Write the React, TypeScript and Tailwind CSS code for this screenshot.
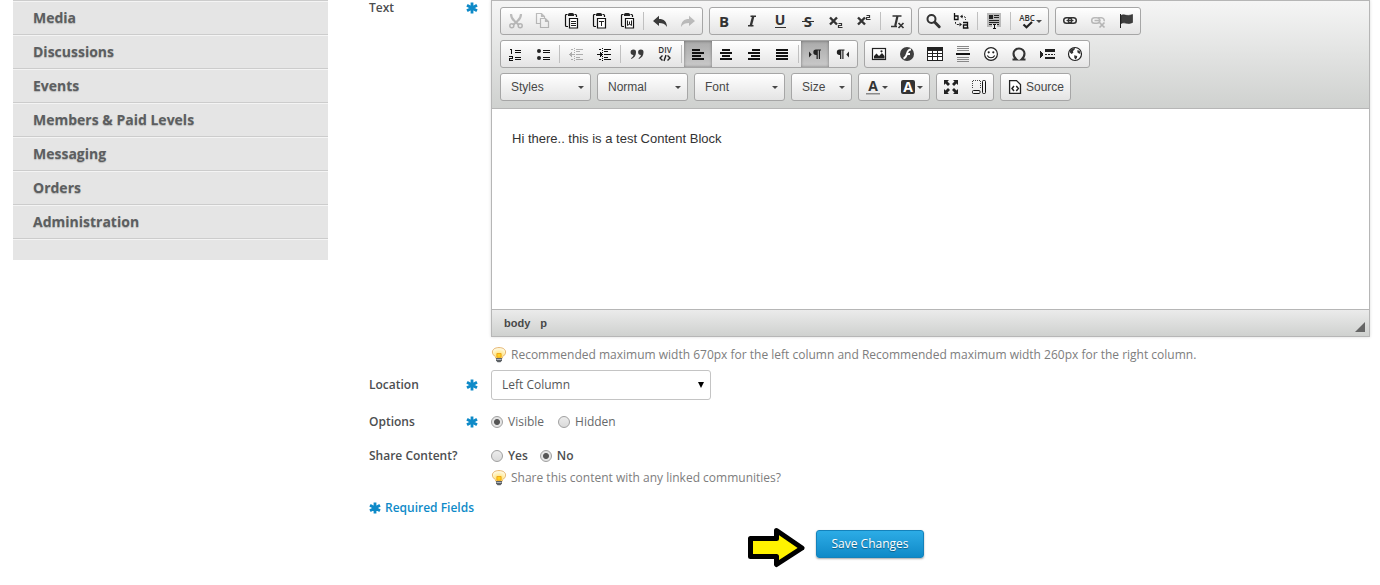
import { useState, type ReactNode } from "react";

const DARK = "#333333";

/* ---------- Icon primitives ---------- */

function Icon({ children, faded, crisp }: { children: ReactNode; faded?: boolean; crisp?: boolean }) {
  return (
    <svg
      viewBox="0 0 16 16"
      aria-hidden="true"
      className={faded ? "size-4 shrink-0 overflow-visible opacity-30" : "size-4 shrink-0 overflow-visible"}
      fill="none"
      stroke="none"
      shapeRendering={crisp ? "crispEdges" : "auto"}
    >
      {children}
    </svg>
  );
}

type GlyphProps = {
  x: number;
  y: number;
  size: number;
  children: string;
  weight?: number;
  fill?: string;
};

function Glyph({ x, y, size, children, weight = 700, fill = DARK }: GlyphProps) {
  return (
    <text
      x={x}
      y={y}
      fontSize={size}
      fontWeight={weight}
      fontFamily="'Open Sans', sans-serif"
      textAnchor="middle"
      fill={fill}
    >
      {children}
    </text>
  );
}

const CutIcon = () => (
  <Icon faded>
    <path d="M4 1c0 3 1 5 3.500 7l4.500 4M14 1c0 3-1 5-3.500 7L6 12" stroke={DARK} strokeWidth="2.200" />
    <circle cx="4.800" cy="12.700" r="2" stroke={DARK} strokeWidth="1.500" />
    <circle cx="13.200" cy="12.700" r="2" stroke={DARK} strokeWidth="1.500" />
  </Icon>
);

const CopyIcon = () => (
  <Icon faded>
    <path d="M5 10.500H1.500V.5h5l3 3V5M6.500 .5v3h3" stroke={DARK} strokeWidth="1.200" />
    <path d="M5.500 5.500h5l3 3v6h-8zM10.500 5.500v3h3" stroke={DARK} strokeWidth="1.200" />
  </Icon>
);

function Clipboard({ children }: { children?: ReactNode }) {
  return (
    <Icon>
      <path d="M4.500 1.500h-1q-1 0-1 1v10q0 1 1 1H5M11.500 1.500h1q1 0 1 1V4" stroke="#111" strokeWidth="1.200" />
      <path d="M5 3V1.500Q5 0 6.500 0h3Q11 0 11 1.500V3z" fill="#222" />
      <path d="M6.500 5.500h8v9.500h-8z" fill="#fff" stroke="#111" strokeWidth="1.200" />
      {children}
    </Icon>
  );
}

const PasteIcon = () => (
  <Clipboard>
    <path d="M8 8.500h5M8 10.500h5M8 12.500h5" stroke="#222" />
  </Clipboard>
);
const PasteTextIcon = () => (
  <Clipboard>
    <path d="M8 8.500h5M10.500 8v5" stroke="#222" />
  </Clipboard>
);
const PasteWordIcon = () => (
  <Clipboard>
    <path d="M8.500 7.500v5l2-1.500 2 1.500v-5M10.500 8.500v3" stroke="#222" />
  </Clipboard>
);

const UndoIcon = () => (
  <Icon>
    <path d="M1 8 7 2.800v3.200c5 0 7.800 2.500 8 8C13 10.800 10.500 10 7 10v3z" fill="#3a3a3a" />
  </Icon>
);
const RedoIcon = () => (
  <Icon faded>
    <path d="M15 8 9 2.800v3.200c-5 0-7.800 2.500-8 8C3 10.800 5.500 10 9 10v3z" fill="#3a3a3a" />
  </Icon>
);

const BoldIcon = () => (
  <Icon>
    <Glyph x={8} y={13.5} size={15}>B</Glyph>
  </Icon>
);
const ItalicIcon = () => (
  <Icon>
    <path d="M6.500 3.200h5.500M4 12.800h5.500" stroke={DARK} strokeWidth="1.600" />
    <path d="M9.300 3 6.700 13" stroke={DARK} strokeWidth="2.400" />
  </Icon>
);
const UnderlineIcon = () => (
  <Icon>
    <Glyph x={8} y={12} size={14}>U</Glyph>
    <path d="M3 14.500h11" stroke={DARK} />
  </Icon>
);
const StrikeIcon = () => (
  <Icon>
    <Glyph x={8} y={13.5} size={15}>S</Glyph>
    <path d="M2 8.500h12" stroke={DARK} />
  </Icon>
);
const SubscriptIcon = () => (
  <Icon>
    <path d="m2 4.500 7 7M9 4.500l-7 7" stroke={DARK} strokeWidth="2.400" />
    <path d="M10.500 10.500h3v2h-3v2h4" stroke={DARK} strokeWidth="1.200" />
  </Icon>
);
const SuperscriptIcon = () => (
  <Icon>
    <path d="m2 4.500 7 7M9 4.500l-7 7" stroke={DARK} strokeWidth="2.400" />
    <path d="M10.500 2.500h3v2h-3v2h4" stroke={DARK} strokeWidth="1.200" />
  </Icon>
);
const RemoveFormatIcon = () => (
  <Icon>
    <path d="M3.500 3h9M2 13.500h6" stroke={DARK} strokeWidth="1.600" />
    <path d="M8.500 3 6.200 13" stroke={DARK} strokeWidth="2.200" />
    <path d="m9.500 10 5 5M14.500 10l-5 5" stroke={DARK} strokeWidth="1.700" />
  </Icon>
);

const FindIcon = () => (
  <Icon>
    <circle cx="6.500" cy="6" r="4" stroke={DARK} strokeWidth="2" />
    <path d="m9.800 9.300 4.400 4.400" stroke={DARK} strokeWidth="3" strokeLinecap="round" />
  </Icon>
);
const ReplaceIcon = () => (
  <Icon>
    <path d="M1.500 0v6.500h3.500V3H1.500M10 9.500h4.500V15h-4v-3h4M14.500 15h1" stroke="#111" strokeWidth="1.300" />
    <path d="M8 3.500h2.500q2 0 2 2v1.500M2.500 9v1q0 1.500 1.500 1.500h3" stroke="#222" strokeDasharray="2 1" />
    <path d="M7 3.500 9.500 1.500v4zM9 11.500 6.500 9.500v4z" fill="#222" />
  </Icon>
);
const SelectAllIcon = () => (
  <Icon crisp>
    <path d="M1 0h14v14H1z" fill="#b9b9b9" />
    <path d="M3 2h4v4H3zM8 2h5v1H8zM8 4h5v1H8zM3 7h10v1H3zM3 9h10v1H3zM3 11h10v1H3z" fill="#222" />
    <path d="M6 11h5v5H6z" fill="#e9e9e9" />
    <path d="M7 11h3v1H9v3h1v1H7v-1h1v-3H7z" fill="#111" />
  </Icon>
);
const SpellIcon = () => (
  <Icon>
    <Glyph x={8} y={8} size={8} weight={600}>ABC</Glyph>
    <path d="m4.500 11.500 3 2.700L13 9" stroke="#222" strokeWidth="2.200" />
  </Icon>
);
const LinkIcon = () => (
  <Icon>
    <rect x="1.700" y="4.700" width="8" height="5.600" rx="2.800" stroke={DARK} strokeWidth="1.500" />
    <rect x="6.300" y="4.700" width="8" height="5.600" rx="2.800" stroke={DARK} strokeWidth="1.500" />
    <path d="M4.500 7.500h7" stroke={DARK} strokeWidth="1.200" />
  </Icon>
);
const UnlinkIcon = () => (
  <Icon faded>
    <rect x="1.700" y="4.700" width="8" height="5.600" rx="2.800" stroke={DARK} strokeWidth="1.500" />
    <path d="M8 4.700h3.500a2.800 2.800 0 0 1 2.600 3.600M4.500 7.500h6" stroke={DARK} strokeWidth="1.500" />
    <path d="m9.500 9.500 5 5M14.500 9.500l-5 5" stroke={DARK} strokeWidth="1.700" />
  </Icon>
);
const AnchorIcon = () => (
  <Icon>
    <path d="M2.500 1v14" stroke="#222" />
    <path d="M3 2.500C6 .5 8 4 14.500 1.500v8C9 12 6.500 8.500 3 10.500z" fill="#3f3f3f" stroke="#222" strokeWidth=".6" />
  </Icon>
);

const NumberedListIcon = () => (
  <Icon crisp>
    <path d="M8 4h6v1H8zM8 6h6v1H8zM8 11h6v1H8zM8 13h6v1H8z" fill="#111" />
    <path d="M3 3h2v5H4V4H3zM2 10h4v3H3v1h3v1H2v-3h3v-1H2z" fill="#111" />
  </Icon>
);
const BulletedListIcon = () => (
  <Icon>
    <circle cx="4" cy="5" r="2" fill="#222" />
    <circle cx="4" cy="12" r="2" fill="#222" />
    <path d="M8 4.500h7M8 6.500h7M8 11.500h7M8 13.500h7" stroke="#111" />
  </Icon>
);
const IndentLines = () => (
  <path d="M8 3h7v1H8zM8 5h4v1H8zM8 8h7v1H8zM8 11h4v1H8zM8 13h7v1H8zM6 2h1v1H6zM6 4h1v1H6zM6 6h1v1H6zM6 10h1v1H6zM6 12h1v1H6zM6 14h1v1H6zM3 3h2v1H3zM3 13h2v1H3z" fill="#111" />
);
const OutdentIcon = () => (
  <Icon faded crisp>
    <IndentLines />
    <path d="M1 8h6v1H1zM2 7h1v3H2zM3 6h1v5H3z" fill="#111" />
  </Icon>
);
const IndentIcon = () => (
  <Icon crisp>
    <IndentLines />
    <path d="M1 8h6v1H1zM5 7h1v3H5zM4 6h1v5H4z" fill="#111" />
  </Icon>
);
const QuoteIcon = () => (
  <Icon>
    <path d="M4.300 3.500a2.700 2.700 0 0 1 2.700 3c0 3-1.700 5.200-4.500 6.500l-.5-.8C3.400 11.400 4.300 10.300 4.400 9a2.750 2.750 0 0 1-.1-5.500zM11.800 3.500a2.700 2.700 0 0 1 2.700 3c0 3-1.700 5.200-4.500 6.500l-.5-.8c1.400-.8 2.300-1.900 2.400-3.200a2.750 2.750 0 0 1-.1-5.500z" fill="#3a3a3a" />
  </Icon>
);
const DivIcon = () => (
  <Icon>
    <Glyph x={8} y={7} size={8} weight={600}>DIV</Glyph>
    <path d="M5.500 9.500 3 12l2.500 2.500M10.500 9.500 13 12l-2.500 2.500M9 9 7 15" stroke="#222" strokeWidth="1.400" />
  </Icon>
);
const AlignLeftIcon = () => (
  <Icon crisp>
    <path d="M2 3h8v2H2zM2 6h12v2H2zM2 9h9v2H2zM2 12h12v2H2z" fill="#111" />
  </Icon>
);
const AlignCenterIcon = () => (
  <Icon crisp>
    <path d="M4 3h8v2H4zM2 6h12v2H2zM4 9h8v2H4zM2 12h12v2H2z" fill="#111" />
  </Icon>
);
const AlignRightIcon = () => (
  <Icon crisp>
    <path d="M6 3h8v2H6zM2 6h12v2H2zM5 9h9v2H5zM2 12h12v2H2z" fill="#111" />
  </Icon>
);
const AlignJustifyIcon = () => (
  <Icon crisp>
    <path d="M2 3h12v2H2zM2 6h12v2H2zM2 9h12v2H2zM2 12h12v2H2z" fill="#111" />
  </Icon>
);
const LtrIcon = () => (
  <Icon>
    <path d="m2 5.500 2.700 3L2 11.500z" fill="#222" />
    <path d="M14 3.500H9a2.700 2.700 0 0 0 0 5.400h.5V13h1.300V4.500h1V13H13V4.500h1z" fill="#222" />
  </Icon>
);
const RtlIcon = () => (
  <Icon>
    <path d="m14 5.500-2.700 3 2.700 3z" fill="#222" />
    <path d="M9.500 3.500h-5a2.700 2.700 0 0 0 0 5.400H5V13h1.300V4.500h1V13h1.200V4.500h1z" fill="#222" />
  </Icon>
);
const ImageIcon = () => (
  <Icon>
    <rect x="1.500" y="2.500" width="13" height="11" fill="#fff" stroke="#222" strokeWidth="1.200" />
    <path d="M3 12.500V10l2.500-2.500L8 10l3-3 2.500 3v2.500z" fill="#222" />
    <circle cx="10.500" cy="5.300" r="1.100" fill="#222" />
  </Icon>
);
const FlashIcon = () => (
  <Icon>
    <circle cx="8" cy="8" r="7" fill="#3f3f3f" />
    <path d="M12 3.500C9 3.500 8.500 5.500 8 7.500S7 12 4.500 12.500M7.500 8h3.500" stroke="#fff" strokeWidth="1.900" />
  </Icon>
);
const TableIcon = () => (
  <Icon crisp>
    <path d="M0 1h16v14H0z" fill="#222" />
    <path d="M1 5h4v2H1zM6 5h4v2H6zM11 5h4v2h-4zM1 8h4v2H1zM6 8h4v2H6zM11 8h4v2h-4zM1 11h4v3H1zM6 11h4v3H6zM11 11h4v3h-4z" fill="#fff" />
  </Icon>
);
const RuleIcon = () => (
  <Icon crisp>
    <path d="M2 0h12v1H2zM2 2h12v1H2zM2 4h12v1H2zM2 11h12v1H2zM2 13h12v1H2zM2 15h12v1H2z" fill="#888" />
    <path d="M1 7h14v2H1z" fill="#111" />
  </Icon>
);
const SmileyIcon = () => (
  <Icon>
    <circle cx="8" cy="8" r="6.400" stroke="#222" strokeWidth="1.200" fill="#fff" />
    <circle cx="5.700" cy="6.300" r="1.100" fill="#222" />
    <circle cx="10.300" cy="6.300" r="1.100" fill="#222" />
    <path d="M4.300 9.500c1.500 3 5.900 3 7.400 0" stroke="#222" strokeWidth="1.200" />
  </Icon>
);
const OmegaIcon = () => (
  <Icon>
    <path d="M1.500 13.500H5.500C3 11.500 2.500 9.500 2.500 7.500a5.500 5 0 0 1 11 0c0 2-.5 4-3 6h4" stroke={DARK} strokeWidth="2.100" />
  </Icon>
);
const PageBreakIcon = () => (
  <Icon crisp>
    <path d="M6 3h10v3H6zM6 11h10v2H6zM6 8h2v1H6zM9 8h2v1H9zM12 8h2v1h-2zM15 8h1v1h-1zM1 5h1v7H1zM2 6h1v5H2zM3 7h1v3H3z" fill="#222" />
  </Icon>
);
const GlobeIcon = () => (
  <Icon>
    <circle cx="8" cy="8" r="6.500" stroke="#222" strokeWidth="1.200" fill="#fff" />
    <path d="M3 4.500C4.300 2.800 6 2 8 2l-.5 1.800L6 5l.3 1.700L4.500 8 3 6.500zM10.500 4l2.200 1 .8 2.500-1.300.3-1.900-1.500zM7.200 9.300l3 .8-.2 1.600-1.500 1.800-1.200-1.700z" fill="#333" />
  </Icon>
);
const TextColorIcon = () => (
  <Icon>
    <Glyph x={8} y={12} size={14}>A</Glyph>
    <path d="M1 14h14v1.500H1z" fill="#8a8a8a" />
  </Icon>
);
const BgColorIcon = () => (
  <Icon>
    <rect x="1" y="1" width="14" height="14" rx="2" fill="#333" />
    <Glyph x={8} y={13} size={14} fill="#fff">A</Glyph>
  </Icon>
);
const MaximizeIcon = () => (
  <Icon>
    <path d="M1 1h5L4.500 2.500 7 5 5 7 2.500 4.500 1 6zM15 1v5l-1.500-1.500L11 7 9 5l2.500-2.500L10 1zM1 15v-5l1.500 1.500L5 9l2 2-2.500 2.500L6 15zM15 15h-5l1.500-1.500L9 11l2-2 2.500 2.500L15 10z" fill="#222" />
  </Icon>
);
const BlocksIcon = () => (
  <Icon>
    <path d="M1.500 9V1.500h8V9" stroke="#444" strokeDasharray="1 1" shapeRendering="crispEdges" />
    <rect x="1.500" y="11.500" width="7.500" height="3" rx="1" stroke="#111" />
    <rect x="11.500" y="1.500" width="3" height="13" rx="1" stroke="#111" />
  </Icon>
);
const SourceIcon = () => (
  <Icon>
    <path d="M2.600 1.600h6.900l4 4V14.400H2.600z" fill="#fff" stroke="#222" strokeWidth="1.300" />
    <path d="M7 7 5 9.500 7 12M9.300 7l2 2.500-2 2.500" stroke="#222" strokeWidth="1.500" />
  </Icon>
);

const Caret = () => (
  <svg viewBox="0 0 6 3" aria-hidden="true" className="h-[3px] w-1.5 shrink-0" fill="#474747">
    <path d="M0 0h6L3 3z" />
  </svg>
);

const Asterisk = () => (
  <svg viewBox="0 0 12 12" aria-hidden="true" className="size-3 shrink-0" stroke="#0e8ac8" strokeWidth="2.800">
    <path d="M6 .5v11M1 3.200l10 5.600M11 3.200 1 8.800" />
  </svg>
);

const Bulb = () => (
  <svg viewBox="0 0 16 16" aria-hidden="true" className="size-4 shrink-0">
    <defs>
      <radialGradient id="bulb-glow" cx=".5" cy=".75" r=".75">
        <stop offset="0" stopColor="#ffd735" />
        <stop offset=".4" stopColor="#ffeb9a" />
        <stop offset="1" stopColor="#fffdf2" />
      </radialGradient>
    </defs>
    <path d="M8 .6c4 0 6.600 1.800 6.600 4.500 0 2.300-1.700 3.500-3.100 4.800L11 11.500H5l-.5-1.600C3.100 8.600 1.400 7.400 1.400 5.100 1.400 2.400 4 .6 8 .6z" fill="url(#bulb-glow)" stroke="#e2ac5c" strokeWidth=".9" />
    <path d="M5.900 6.500h4.200v3.800H5.900z" fill="#ffd21f" stroke="#eb9a12" strokeWidth=".8" />
    <path d="M5 11h6v2.400L9.500 15.300h-3L5 13.400z" fill="#5d6266" />
    <path d="M5.500 12.500h5" stroke="#c8ccd0" strokeWidth=".8" />
  </svg>
);

/* ---------- Toolbar parts ---------- */

const Group = ({ children }: { children: ReactNode }) => (
  <div className="flex h-7 items-stretch overflow-hidden rounded-[3px] border border-[#a6a6a6] bg-linear-to-b from-white to-[#e4e4e4]">
    {children}
  </div>
);

const Sep = () => <span className="mx-0.5 my-1 w-px bg-[#c0c0c0]" />;

function Tool({ label, icon, active, disabled, menu }: { label: string; icon: ReactNode; active?: boolean; disabled?: boolean; menu?: boolean }) {
  return (
    <button
      type="button"
      title={label}
      aria-label={label}
      aria-pressed={active}
      disabled={disabled}
      className={
        active
          ? "flex items-center bg-linear-to-b from-[#aaaaaa] to-[#cacaca] px-1.5 shadow-[inset_0_0_3px_rgba(0,0,0,0.4)]"
          : "flex items-center px-1.5"
      }
    >
      {icon}
      {menu && (
        <span className="ml-px">
          <Caret />
        </span>
      )}
    </button>
  );
}

function Combo({ label, narrow }: { label: string; narrow?: boolean }) {
  return (
    <div className={narrow ? "relative h-7 w-[61px]" : "relative h-7 w-[91px]"}>
      <select
        aria-label={label}
        defaultValue={label}
        className="size-full appearance-none rounded-[3px] border border-[#a6a6a6] bg-linear-to-b from-white to-[#e4e4e4] pl-2.5 font-['Liberation_Sans',sans-serif] text-xs text-[#474747]"
      >
        <option>{label}</option>
      </select>
      <span className="pointer-events-none absolute inset-y-0 right-[7px] flex items-center">
        <Caret />
      </span>
    </div>
  );
}

function Editor() {
  return (
    <div className="border border-[#b6b6b6] shadow-[0_0_3px_rgba(0,0,0,0.15)]">
      <div className="flex flex-col gap-[5px] border-b border-[#b6b6b6] bg-linear-to-b from-[#f5f5f5] to-[#cfd1cf] px-2 pt-1.5 pb-[7px]">
        <div className="flex gap-1.5">
          <Group>
            <Tool label="Cut" icon={<CutIcon />} disabled />
            <Tool label="Copy" icon={<CopyIcon />} disabled />
            <Tool label="Paste" icon={<PasteIcon />} />
            <Tool label="Paste as plain text" icon={<PasteTextIcon />} />
            <Tool label="Paste from Word" icon={<PasteWordIcon />} />
            <Sep />
            <Tool label="Undo" icon={<UndoIcon />} />
            <Tool label="Redo" icon={<RedoIcon />} disabled />
          </Group>
          <Group>
            <Tool label="Bold" icon={<BoldIcon />} />
            <Tool label="Italic" icon={<ItalicIcon />} />
            <Tool label="Underline" icon={<UnderlineIcon />} />
            <Tool label="Strike Through" icon={<StrikeIcon />} />
            <Tool label="Subscript" icon={<SubscriptIcon />} />
            <Tool label="Superscript" icon={<SuperscriptIcon />} />
            <Sep />
            <Tool label="Remove Format" icon={<RemoveFormatIcon />} />
          </Group>
          <Group>
            <Tool label="Find" icon={<FindIcon />} />
            <Tool label="Replace" icon={<ReplaceIcon />} />
            <Sep />
            <Tool label="Select All" icon={<SelectAllIcon />} />
            <Sep />
            <Tool label="Spell Check" icon={<SpellIcon />} menu />
          </Group>
          <Group>
            <Tool label="Link" icon={<LinkIcon />} />
            <Tool label="Unlink" icon={<UnlinkIcon />} disabled />
            <Tool label="Anchor" icon={<AnchorIcon />} />
          </Group>
        </div>
        <div className="flex gap-1.5">
          <Group>
            <Tool label="Numbered List" icon={<NumberedListIcon />} />
            <Tool label="Bulleted List" icon={<BulletedListIcon />} />
            <Sep />
            <Tool label="Decrease Indent" icon={<OutdentIcon />} disabled />
            <Tool label="Increase Indent" icon={<IndentIcon />} />
            <Sep />
            <Tool label="Block Quote" icon={<QuoteIcon />} />
            <Tool label="Create Div Container" icon={<DivIcon />} />
            <Sep />
            <Tool label="Align Left" icon={<AlignLeftIcon />} active />
            <Tool label="Center" icon={<AlignCenterIcon />} />
            <Tool label="Align Right" icon={<AlignRightIcon />} />
            <Tool label="Justify" icon={<AlignJustifyIcon />} />
            <Sep />
            <Tool label="Text direction left to right" icon={<LtrIcon />} active />
            <Tool label="Text direction right to left" icon={<RtlIcon />} />
          </Group>
          <Group>
            <Tool label="Image" icon={<ImageIcon />} />
            <Tool label="Flash" icon={<FlashIcon />} />
            <Tool label="Table" icon={<TableIcon />} />
            <Tool label="Horizontal Line" icon={<RuleIcon />} />
            <Tool label="Smiley" icon={<SmileyIcon />} />
            <Tool label="Special Character" icon={<OmegaIcon />} />
            <Tool label="Page Break" icon={<PageBreakIcon />} />
            <Tool label="IFrame" icon={<GlobeIcon />} />
          </Group>
        </div>
        <div className="flex gap-1.5">
          <Combo label="Styles" />
          <Combo label="Normal" />
          <Combo label="Font" />
          <Combo label="Size" narrow />
          <Group>
            <Tool label="Text Color" icon={<TextColorIcon />} menu />
            <Tool label="Background Color" icon={<BgColorIcon />} menu />
          </Group>
          <Group>
            <Tool label="Maximize" icon={<MaximizeIcon />} />
            <Tool label="Show Blocks" icon={<BlocksIcon />} />
          </Group>
          <Group>
            <button type="button" className="flex items-center gap-[3px] px-1.5 font-['Liberation_Sans',sans-serif] text-xs text-[#474747]">
              <SourceIcon />
              Source
            </button>
          </Group>
        </div>
      </div>
      <textarea
        id="content-text"
        defaultValue="Hi there.. this is a test Content Block"
        className="block h-[200px] w-full resize-none bg-white p-5 font-['Liberation_Sans',sans-serif] text-[13px] leading-5 text-[#333333] outline-none"
      />
      <div className="flex h-[27px] items-center justify-between border-t border-[#b6b6b6] bg-linear-to-b from-[#ebebeb] to-[#cfd1cf] pr-1 pl-3 font-['Liberation_Sans',sans-serif] text-[11px] font-bold text-[#484848]">
        <div className="flex gap-2.5">
          <button type="button">body</button>
          <button type="button">p</button>
        </div>
        <svg viewBox="0 0 10 10" aria-hidden="true" className="mt-2 size-2.5" fill="#666">
          <path d="M10 0v10H0z" />
        </svg>
      </div>
    </div>
  );
}

/* ---------- Form parts ---------- */

function Row({ label, htmlFor, required, alignTop, children }: { label: string; htmlFor?: string; required?: boolean; alignTop?: boolean; children: ReactNode }) {
  return (
    <div className={alignTop ? "grid grid-cols-[122px_1fr] items-start" : "grid grid-cols-[122px_1fr] items-center"}>
      <div className="flex items-center justify-between pr-[13px] text-xs leading-4 font-semibold text-[#4c4e50]">
        {htmlFor ? <label htmlFor={htmlFor}>{label}</label> : <span>{label}</span>}
        {required && <Asterisk />}
      </div>
      {children}
    </div>
  );
}

const Hint = ({ children }: { children: ReactNode }) => (
  <p className="flex h-5 items-center gap-1 text-xs text-[#7d7d7d]">
    <Bulb />
    {children}
  </p>
);

function RadioSet({ name, options, initial, bold }: { name: string; options: string[]; initial: string; bold?: boolean }) {
  const [value, setValue] = useState(initial);
  return (
    <div role="radiogroup" aria-label={name} className={bold ? "flex h-5 gap-3 text-xs font-semibold text-[#4c4e50]" : "flex h-5 gap-3.5 text-xs text-[#66686a]"}>
      {options.map((option) => (
        <label key={option} className="flex items-center gap-[5px]">
          <input
            type="radio"
            name={name}
            checked={value === option}
            onChange={() => setValue(option)}
            className="size-3 appearance-none rounded-full border border-[#a0a0a0] bg-linear-to-b from-[#ececec] to-[#dadada] checked:bg-[radial-gradient(circle,#555_0_2.5px,#e4e4e4_3.5px)]"
          />
          {option}
        </label>
      ))}
    </div>
  );
}

const MENU = ["Media", "Discussions", "Events", "Members & Paid Levels", "Messaging", "Orders", "Administration"];

export default function App() {
  return (
    <div className="flex items-start bg-white pr-2.5 pl-[13px] font-['Open_Sans',sans-serif]">
      <nav className="w-[315px] shrink-0 bg-[#e5e5e5]">
        {MENU.map((item) => (
          <a
            key={item}
            href="#"
            className="flex h-[34px] items-center border-t border-[#cccccc] pl-5 text-sm font-bold text-[#5c5e60] shadow-[inset_0_1px_0_#f4f4f4] [text-shadow:0_1px_1px_rgba(0,0,0,0.2)]"
          >
            {item}
          </a>
        ))}
        <div className="h-[22px] border-t border-[#cccccc] shadow-[inset_0_1px_0_#f4f4f4]" />
      </nav>

      <form className="min-w-0 flex-1 pl-[41px]" onSubmit={(e) => e.preventDefault()}>
        <Row label="Text" htmlFor="content-text" required alignTop>
          <div className="min-w-0">
            <Editor />
            <div className="mt-2">
              <Hint>Recommended maximum width 670px for the left column and Recommended maximum width 260px for the right column.</Hint>
            </div>
          </div>
        </Row>

        <div className="mt-[5px]">
          <Row label="Location" htmlFor="location" required>
            <div className="relative w-[220px]">
              <select
                id="location"
                className="block h-[30px] w-full appearance-none rounded-[3px] border border-[#c4c4c4] bg-white pl-2.5 text-xs text-[#555759]"
              >
                <option>Left Column</option>
                <option>Right Column</option>
              </select>
              <span className="pointer-events-none absolute inset-y-0 right-[7px] flex items-center">
                <svg viewBox="0 0 6 6" aria-hidden="true" className="size-1.5" fill="#000">
                  <path d="M0 0h6L3 6z" />
                </svg>
              </span>
            </div>
          </Row>
        </div>

        <div className="mt-3">
          <Row label="Options" required>
            <RadioSet name="Options" options={["Visible", "Hidden"]} initial="Visible" />
          </Row>
        </div>

        <div className="mt-3.5">
          <Row label="Share Content?">
            <RadioSet name="Share Content?" options={["Yes", "No"]} initial="No" bold />
          </Row>
        </div>
        <div className="mt-0.5 pl-[122px]">
          <Hint>Share this content with any linked communities?</Hint>
        </div>

        <p className="mt-2.5 flex h-5 items-center gap-1 text-xs font-semibold text-[#0e8ac8]">
          <Asterisk />
          Required Fields
        </p>

        <div className="mt-2 flex items-start justify-center gap-2.5 pr-[67px]">
          <svg viewBox="0 0 58 42" aria-hidden="true" className="h-[42px] w-[58px]">
            <path d="M2.500 12.500h26V4.500L54 22 28.500 38.500v-8h-26z" fill="#fff200" stroke="#000" strokeWidth="5" strokeLinejoin="round" />
          </svg>
          <button
            type="submit"
            className="mt-1 h-7 rounded-[3px] border border-[#1482bb] bg-linear-to-b from-[#2cace6] to-[#0e8ac8] px-3.5 text-xs font-medium text-white shadow-[0_1px_2px_rgba(0,0,0,0.35)] [text-shadow:0_1px_1px_rgba(0,0,0,0.4)]"
          >
            Save Changes
          </button>
        </div>
      </form>
    </div>
  );
}
